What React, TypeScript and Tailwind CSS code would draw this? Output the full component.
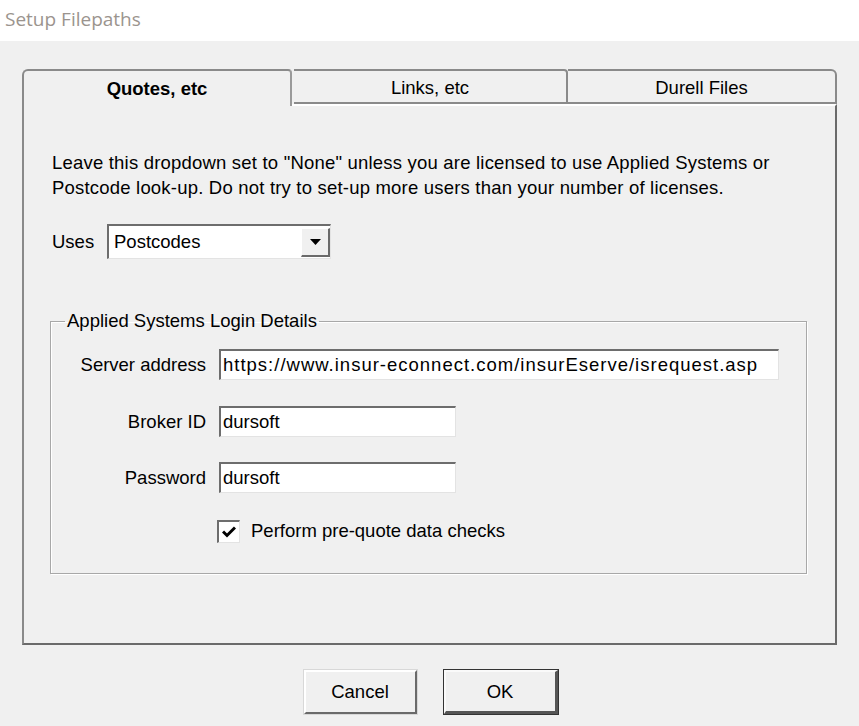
export default function App() {
    const sunken = "bg-white border-t-2 border-l-2 border-t-[#6d6d6d] border-l-[#6d6d6d] border-b border-r border-b-[#e3e3e3] border-r-[#e3e3e3]"
    return (
        <div className="w-[859px] h-[726px] bg-[#f0f0f0] flex flex-col font-['Liberation_Sans',Arial,sans-serif] text-[18.5px] text-black">
            <div className="h-[41px] bg-white pl-[5px] pt-[5px] font-['Open_Sans',sans-serif] text-[19px] leading-[28px] text-[#9b948e]">Setup Filepaths</div>

            <div className="flex flex-col mt-[28px] mx-[22px] w-[815px]">
                {/* tabs */}
                <div className="flex h-[35px] items-end">
                    <div className="w-[270px] bg-[#f0f0f0] border-t-2 border-l-2 border-r-2 border-t-[#8a8a8a] border-l-[#8a8a8a] border-r-[#9a9a9a] rounded-tl-[6px] rounded-tr-[4px] flex items-center justify-center font-bold relative z-10 -mb-[2px] h-[37px] pt-[1px]">
                        Quotes, etc
                    </div>
                    <div className="w-[274px] h-[35px] border-t-2 border-r-2 border-b-2 border-t-[#8a8a8a] border-r-[#8a8a8a] border-b-[#8a8a8a] rounded-tr-[4px] flex items-center justify-center ml-[2px] pt-[2px]">
                        Links, etc
                    </div>
                    <div className="flex-1 h-[35px] border-t-2 border-r-2 border-b-2 border-t-[#8a8a8a] border-r-[#8a8a8a] border-b-[#8a8a8a] rounded-tr-[6px] flex items-center justify-center pt-[2px]">
                        Durell Files
                    </div>
                </div>

                {/* panel */}
                <div className="h-[541px] border-l-2 border-l-[#8a8a8a] border-r-2 border-r-[#6a6a6a] border-b-2 border-b-[#6a6a6a] border-t-2 border-t-white flex flex-col pl-[28px] pr-[28px]">
                    <p className="mt-[44px] leading-[25px] tracking-[0.2px]">
                        Leave this dropdown set to "None" unless you are licensed to use Applied Systems or<br />
                        Postcode look-up. Do not try to set-up more users than your number of licenses.
                    </p>

                    <div className="flex items-center mt-[24px] h-[35px]">
                        <span className="w-[55px]">Uses</span>
                        <div className={`${sunken} w-[224px] h-[35px] flex items-center`}>
                            <span className="flex-1 pl-[5px]">Postcodes</span>
                            <div className="w-[29px] h-[29px] bg-[#f0f0f0] border-t border-l border-white border-b-2 border-r-2 border-b-[#6a6a6a] border-r-[#6a6a6a] flex items-center justify-center">
                                <svg width="11" height="6" viewBox="0 0 11 6"><path d="M0 0 H11 L5.5 6 Z" fill="#000" /></svg>
                            </div>
                        </div>
                    </div>

                    <fieldset className="mt-[51px] ml-[-2px] w-[757px] h-[264px] border border-[#a8a8a8] shadow-[1px_1px_0_#ffffff,inset_1px_1px_0_#ffffff] p-0">
                        <legend className="ml-[14px] px-[2px] leading-[22px]">Applied Systems Login Details</legend>
                        <div className="flex flex-col mt-[17px]">
                            <div className="flex items-center h-[31px]">
                                <span className="w-[168px] text-right pr-[13px]">Server address</span>
                                <div className={`${sunken} w-[560px] h-[31px] pl-[2px] leading-[28px] tracking-[1px]`}>https://www.insur-econnect.com/insurEserve/isrequest.asp</div>
                            </div>
                            <div className="flex items-center h-[31px] mt-[26px]">
                                <span className="w-[168px] text-right pr-[13px]">Broker ID</span>
                                <div className={`${sunken} w-[237px] h-[31px] pl-[2px] leading-[28px]`}>dursoft</div>
                            </div>
                            <div className="flex items-center h-[31px] mt-[25px]">
                                <span className="w-[168px] text-right pr-[13px]">Password</span>
                                <div className={`${sunken} w-[237px] h-[31px] pl-[2px] leading-[28px]`}>dursoft</div>
                            </div>
                            <div className="flex items-center h-[24px] mt-[26px] pl-[166px]">
                                <div className={`${sunken} w-[23px] h-[23px] flex items-center justify-center`}>
                                    <svg width="14" height="12" viewBox="0 0 14 12"><path d="M1 5.5 L5 9.5 L13 1.5" stroke="#000" strokeWidth="3" fill="none" /></svg>
                                </div>
                                <span className="ml-[11px]">Perform pre-quote data checks</span>
                            </div>
                        </div>
                    </fieldset>
                </div>
            </div>

            <div className="flex justify-center gap-[27px] mt-[25px] ml-[2px]">
                <button className="w-[113px] h-[44px] bg-[#f0f0f0] border-t-2 border-l-2 border-white border-b-2 border-r-2 border-b-[#6a6a6a] border-r-[#6a6a6a] outline outline-1 outline-[#d8d8d8]">Cancel</button>
                <button className="w-[114px] h-[44px] bg-[#f0f0f0] border-t-2 border-l-2 border-t-[#fafafa] border-l-[#fafafa] border-b-[3px] border-r-[3px] border-b-[#555] border-r-[#555] outline outline-1 outline-[#333]">OK</button>
            </div>
        </div>
    )
}
